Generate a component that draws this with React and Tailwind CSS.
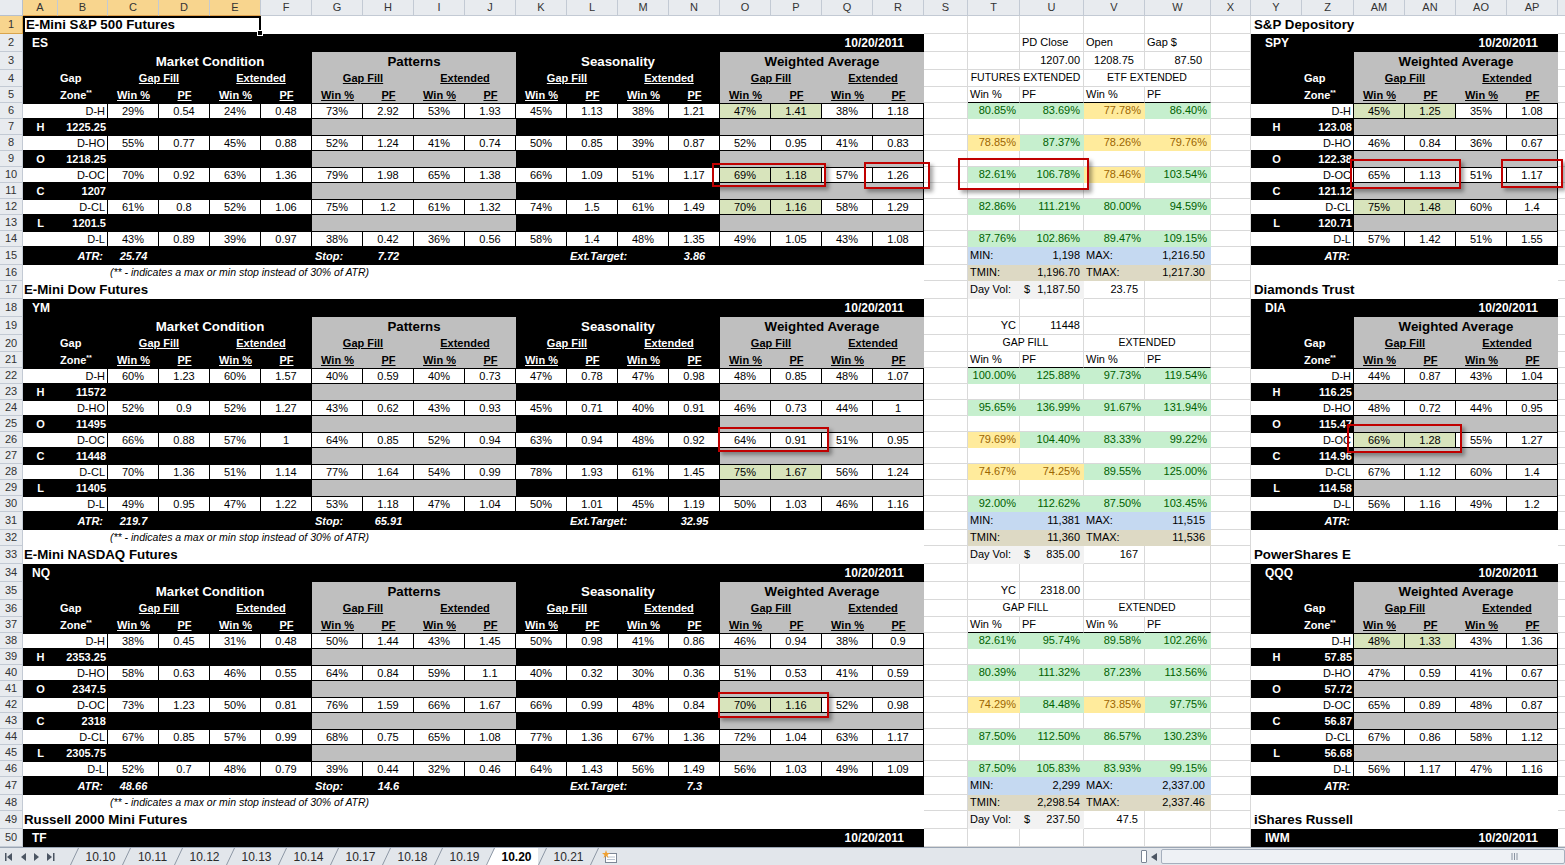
import React from "react";

const SEC = ["bg-black text-white", "bg-[#bfbfbf] text-black"];
const GL = "border-r border-b border-[#d9d9d9]";
const MW = ["w-[52px]", "w-[64px]", "w-[61px]", "w-[66px]"];
const AL = {
  l: "justify-start pl-[2px]",
  r: "justify-end pr-[3px]",
  c: "justify-center",
  r8: "justify-end pr-[8px]",
  "": "",
};
const FILL = {
  g: "bg-[#c6efce] text-[#006100] border-[#c6efce]",
  y: "bg-[#ffeb9c] text-[#9c6500] border-[#ffeb9c]",
};

const cols = [
  ["A", "w-[35px]", 1], ["B", "w-[50px]", 1], ["C", "w-[51px]", 1], ["D", "w-[51px]", 1], ["E", "w-[51px]", 1],
  ["F", "w-[51px]"], ["G", "w-[51px]"], ["H", "w-[51px]"], ["I", "w-[51px]"], ["J", "w-[51px]"],
  ["K", "w-[51px]"], ["L", "w-[51px]"], ["M", "w-[51px]"], ["N", "w-[51px]"], ["O", "w-[51px]"],
  ["P", "w-[51px]"], ["Q", "w-[51px]"], ["R", "w-[51px]"], ["S", "w-[44px]"], ["T", "w-[52px]"],
  ["U", "w-[64px]"], ["V", "w-[61px]"], ["W", "w-[66px]"], ["X", "w-[40px]"], ["Y", "w-[51px]"],
  ["Z", "w-[52px]"], ["AM", "w-[51px]"], ["AN", "w-[51px]"], ["AO", "w-[51px]"], ["AP", "w-[51px]"],
];

const blank = { t: "blank" };
const gapFill = { t: "span", a: "GAP FILL", b: "EXTENDED" };

const blocks = [
  {
    title: "E-Mini S&P 500 Futures", tk: "ES", etf: "S&P Depository", etk: "SPY",
    top: [
      { t: "cells", c: [["", ""], ["PD Close", "l"], ["Open", "l"], ["Gap $", "l"]] },
      { t: "cells", c: [["", ""], ["1207.00", "r"], ["1208.75", "c"], ["87.50", "r8"]] },
      { t: "span", a: "FUTURES EXTENDED", b: "ETF EXTENDED" },
    ],
    rows: [
      ["D-H", "29% 0.54 24% 0.48 73% 2.92 53% 1.93 45% 1.13 38% 1.21 47% 1.41 38% 1.18", [12, 13], "45% 1.25 35% 1.08", [0, 1], "80.85%g 83.69%g 77.78%y 86.40%g"],
      ["D-HO", "55% 0.77 45% 0.88 52% 1.24 41% 0.74 50% 0.85 39% 0.87 52% 0.95 41% 0.83", [], "46% 0.84 36% 0.67", [], "78.85%y 87.37%g 78.26%y 79.76%y"],
      ["D-OC", "70% 0.92 63% 1.36 79% 1.98 65% 1.38 66% 1.09 51% 1.17 69% 1.18 57% 1.26", [12, 13], "65% 1.13 51% 1.17", [], "82.61%g 106.78%g 78.46%y 103.54%g"],
      ["D-CL", "61% 0.8 52% 1.06 75% 1.2 61% 1.32 74% 1.5 61% 1.49 70% 1.16 58% 1.29", [12, 13], "75% 1.48 60% 1.4", [0, 1], "82.86%g 111.21%g 80.00%g 94.59%g"],
      ["D-L", "43% 0.89 39% 0.97 38% 0.42 36% 0.56 58% 1.4 48% 1.35 49% 1.05 43% 1.08", [], "57% 1.42 51% 1.55", [], "87.76%g 102.86%g 89.47%g 109.15%g"],
    ],
    levels: [["H", "1225.25", "123.08"], ["O", "1218.25", "122.38"], ["C", "1207", "121.12"], ["L", "1201.5", "120.71"]],
    atr: ["25.74", "7.72", "3.86"],
    min: ["1,198", "1,216.50"], tmin: ["1,196.70", "1,217.30"], dv: ["1,187.50", "23.75"],
  },
  {
    title: "E-Mini Dow Futures", tk: "YM", etf: "Diamonds Trust", etk: "DIA",
    top: [blank, { t: "cells", c: [["YC", "r"], ["11448", "r"], ["", ""], ["", ""]] }, gapFill],
    rows: [
      ["D-H", "60% 1.23 60% 1.57 40% 0.59 40% 0.73 47% 0.78 47% 0.98 48% 0.85 48% 1.07", [], "44% 0.87 43% 1.04", [], "100.00%g 125.88%g 97.73%g 119.54%g"],
      ["D-HO", "52% 0.9 52% 1.27 43% 0.62 43% 0.93 45% 0.71 40% 0.91 46% 0.73 44% 1", [], "48% 0.72 44% 0.95", [], "95.65%g 136.99%g 91.67%g 131.94%g"],
      ["D-OC", "66% 0.88 57% 1 64% 0.85 52% 0.94 63% 0.94 48% 0.92 64% 0.91 51% 0.95", [], "66% 1.28 55% 1.27", [0, 1], "79.69%y 104.40%g 83.33%g 99.22%g"],
      ["D-CL", "70% 1.36 51% 1.14 77% 1.64 54% 0.99 78% 1.93 61% 1.45 75% 1.67 56% 1.24", [12, 13], "67% 1.12 60% 1.4", [], "74.67%y 74.25%y 89.55%g 125.00%g"],
      ["D-L", "49% 0.95 47% 1.22 53% 1.18 47% 1.04 50% 1.01 45% 1.19 50% 1.03 46% 1.16", [], "56% 1.16 49% 1.2", [], "92.00%g 112.62%g 87.50%g 103.45%g"],
    ],
    levels: [["H", "11572", "116.25"], ["O", "11495", "115.47"], ["C", "11448", "114.96"], ["L", "11405", "114.58"]],
    atr: ["219.7", "65.91", "32.95"],
    min: ["11,381", "11,515"], tmin: ["11,360", "11,536"], dv: ["835.00", "167"],
  },
  {
    title: "E-Mini NASDAQ Futures", tk: "NQ", etf: "PowerShares E", etk: "QQQ",
    top: [blank, { t: "cells", c: [["YC", "r"], ["2318.00", "r"], ["", ""], ["", ""]] }, gapFill],
    rows: [
      ["D-H", "38% 0.45 31% 0.48 50% 1.44 43% 1.45 50% 0.98 41% 0.86 46% 0.94 38% 0.9", [], "48% 1.33 43% 1.36", [0, 1], "82.61%g 95.74%g 89.58%g 102.26%g"],
      ["D-HO", "58% 0.63 46% 0.55 64% 0.84 59% 1.1 40% 0.32 30% 0.36 51% 0.53 41% 0.59", [], "47% 0.59 41% 0.67", [], "80.39%g 111.32%g 87.23%g 113.56%g"],
      ["D-OC", "73% 1.23 50% 0.81 76% 1.59 66% 1.67 66% 0.99 48% 0.84 70% 1.16 52% 0.98", [12, 13], "65% 0.89 48% 0.87", [], "74.29%y 84.48%g 73.85%y 97.75%g"],
      ["D-CL", "67% 0.85 57% 0.99 68% 0.75 65% 1.08 77% 1.36 67% 1.36 72% 1.04 63% 1.17", [], "67% 0.86 58% 1.12", [], "87.50%g 112.50%g 86.57%g 130.23%g"],
      ["D-L", "52% 0.7 48% 0.79 39% 0.44 32% 0.46 64% 1.43 56% 1.49 56% 1.03 49% 1.09", [], "56% 1.17 47% 1.16", [], "87.50%g 105.83%g 83.93%g 99.15%g"],
    ],
    levels: [["H", "2353.25", "57.85"], ["O", "2347.5", "57.72"], ["C", "2318", "56.87"], ["L", "2305.75", "56.68"]],
    atr: ["48.66", "14.6", "7.3"],
    min: ["2,299", "2,337.00"], tmin: ["2,298.54", "2,337.46"], dv: ["237.50", "47.5"],
  },
  {
    title: "Russell 2000 Mini Futures", tk: "TF", etf: "iShares Russell", etk: "IWM",
    top: [blank, blank, blank],
  },
];

const boxes = [
  "left-[712px] top-[163px] w-[114px] h-[24px]",
  "left-[864px] top-[162px] w-[66px] h-[27px]",
  "left-[958px] top-[158px] w-[131px] h-[32px]",
  "left-[1350px] top-[159px] w-[111px] h-[30px]",
  "left-[1501px] top-[159px] w-[62px] h-[29px]",
  "left-[718px] top-[427px] w-[111px] h-[25px]",
  "left-[1347px] top-[424px] w-[115px] h-[29px]",
  "left-[718px] top-[692px] w-[111px] h-[26px]",
];

const HEIGHTS = [
  "h-[18px]", "h-[18px]", "h-[18px]", "h-[17px]", "h-[16px]",
  "h-[16px]", "h-[16px]", "h-[16px]", "h-[16px]", "h-[16px]", "h-[16px]", "h-[16px]", "h-[16px]", "h-[16px]",
  "h-[18px]", "h-[16px]",
];

/* ---------- left panel (A-R) ---------- */

function LeftTitle({ text, first }) {
  if (first) {
    return (
      <div className="flex w-[901px] shrink-0 bg-white">
        <div className="relative w-[238px] shrink-0 border-2 border-black flex items-center pl-px font-bold text-[13.3px] whitespace-nowrap">
          {text}
          <div className="absolute -right-[4px] -bottom-[4px] w-[6px] h-[6px] bg-black border border-white" />
        </div>
        <div className="flex-1" />
      </div>
    );
  }
  return (
    <div className="w-[901px] shrink-0 bg-white flex items-end pb-[2px] pl-px font-bold text-[13.3px] leading-[14px] whitespace-nowrap">{text}</div>
  );
}

function PanelHdr({ w, tk, pl }) {
  return (
    <div className={`${w} ${pl} shrink-0 bg-black text-white font-bold text-[12px] flex items-center justify-between pr-[20px]`}>
      <span>{tk}</span>
      <span>10/20/2011</span>
    </div>
  );
}

function LeftCat() {
  const t = ["Market Condition", "Patterns", "Seasonality", "Weighted Average"];
  return (
    <div className="flex w-[901px] shrink-0 font-bold text-[13.3px] leading-[14px]">
      <div className="w-[85px] bg-black" />
      {t.map((x, i) => (
        <div key={x} className={`w-[204px] flex items-end pb-[1px] justify-center ${SEC[i % 2]}`}>{x}</div>
      ))}
    </div>
  );
}

function LeftSub() {
  return (
    <div className="flex w-[901px] shrink-0 font-bold text-[11px]">
      <div className="w-[35px] bg-black" />
      <div className="w-[50px] bg-black text-white flex items-center pl-[2px]">Gap</div>
      {Array.from({ length: 8 }, (_, i) => (
        <div key={i} className={`w-[102px] flex items-center justify-center ${SEC[(i >> 1) % 2]}`}>
          <span className="underline">{i % 2 ? "Extended" : "Gap Fill"}</span>
        </div>
      ))}
    </div>
  );
}

function Zone() {
  return (
    <span>
      Zone<sup className="text-[7px]">**</sup>
    </span>
  );
}

function LeftCols() {
  return (
    <div className="flex w-[901px] shrink-0 font-bold text-[11px]">
      <div className="w-[35px] bg-black" />
      <div className="w-[50px] bg-black text-white flex items-center pl-[2px]"><Zone /></div>
      {Array.from({ length: 16 }, (_, i) => (
        <div key={i} className={`w-[51px] flex items-center justify-center ${SEC[(i >> 2) % 2]}`}>
          <span className="underline">{i % 2 ? "PF" : "Win %"}</span>
        </div>
      ))}
    </div>
  );
}

function DataCells({ vals, green }) {
  return vals.map((v, i) => (
    <div
      key={i}
      className={`w-[51px] shrink-0 border-y border-r border-black flex items-center justify-center ${green.includes(i) ? "bg-[#d8e4bc]" : "bg-white"}`}
    >
      {v}
    </div>
  ));
}

function LeftData({ z, v, g }) {
  return (
    <div className="flex w-[901px] shrink-0 text-[11px]">
      <div className="w-[85px] bg-white border-y border-r border-black flex items-center justify-end pr-[2px]">{z}</div>
      <DataCells vals={v.split(" ")} green={g} />
    </div>
  );
}

function LeftLevel({ lv, p }) {
  return (
    <div className="flex w-[901px] shrink-0 text-[11px] font-bold">
      <div className="w-[35px] bg-black text-white flex items-center justify-center">{lv}</div>
      <div className="w-[50px] bg-black text-white flex items-center justify-end pr-[2px]">{p}</div>
      <div className="w-[204px] bg-black" />
      <div className="w-[204px] bg-[#bfbfbf]" />
      <div className="w-[204px] bg-black" />
      <div className="w-[204px] bg-[#bfbfbf] border-r border-black" />
    </div>
  );
}

function LeftAtr({ a }) {
  return (
    <div className="flex w-[901px] shrink-0 bg-black text-white text-[11px] font-bold italic whitespace-nowrap">
      <div className="w-[85px] flex items-center justify-end pr-[5px]">ATR:</div>
      <div className="w-[51px] flex items-center justify-center">{a[0]}</div>
      <div className="w-[153px]" />
      <div className="w-[51px] flex items-center pl-[3px]">Stop:</div>
      <div className="w-[51px] flex items-center justify-center">{a[1]}</div>
      <div className="w-[153px]" />
      <div className="w-[102px] flex items-center pl-[3px]">Ext.Target:</div>
      <div className="w-[51px] flex items-center justify-center">{a[2]}</div>
      <div className="w-[204px]" />
    </div>
  );
}

function LeftNote() {
  return (
    <div className="w-[901px] shrink-0 bg-white flex items-center pl-[87px] text-[10.5px] italic whitespace-nowrap">
      (** - indicates a max or min stop instead of 30% of ATR)
    </div>
  );
}

/* ---------- right panel (Y-AP) ---------- */

function RightTitle({ text }) {
  return (
    <div className="w-[307px] shrink-0 bg-white flex items-end pb-[2px] pl-[3px] font-bold text-[13.3px] leading-[14px] whitespace-nowrap overflow-hidden">
      {text}
    </div>
  );
}

function RightCat() {
  return (
    <div className="flex w-[307px] shrink-0 font-bold text-[13.3px] leading-[14px]">
      <div className="w-[103px] bg-black" />
      <div className="w-[204px] bg-[#bfbfbf] flex items-end pb-[1px] justify-center">Weighted Average</div>
    </div>
  );
}

function RightSub() {
  return (
    <div className="flex w-[307px] shrink-0 font-bold text-[11px]">
      <div className="w-[51px] bg-black" />
      <div className="w-[52px] bg-black text-white flex items-center pl-[2px]">Gap</div>
      <div className="w-[102px] bg-[#bfbfbf] flex items-center justify-center"><span className="underline">Gap Fill</span></div>
      <div className="w-[102px] bg-[#bfbfbf] flex items-center justify-center"><span className="underline">Extended</span></div>
    </div>
  );
}

function RightCols() {
  return (
    <div className="flex w-[307px] shrink-0 font-bold text-[11px]">
      <div className="w-[51px] bg-black" />
      <div className="w-[52px] bg-black text-white flex items-center pl-[2px]"><Zone /></div>
      {["Win %", "PF", "Win %", "PF"].map((t, i) => (
        <div key={i} className="w-[51px] bg-[#bfbfbf] flex items-center justify-center">
          <span className="underline">{t}</span>
        </div>
      ))}
    </div>
  );
}

function RightData({ z, v, g }) {
  return (
    <div className="flex w-[307px] shrink-0 text-[11px]">
      <div className="w-[103px] bg-white border-y border-r border-black flex items-center justify-end pr-[2px]">{z}</div>
      <DataCells vals={v.split(" ")} green={g} />
    </div>
  );
}

function RightLevel({ lv, p }) {
  return (
    <div className="flex w-[307px] shrink-0 text-[11px] font-bold">
      <div className="w-[51px] bg-black text-white flex items-center justify-center">{lv}</div>
      <div className="w-[52px] bg-black text-white flex items-center justify-end pr-[2px]">{p}</div>
      <div className="w-[204px] bg-[#bfbfbf] border-r border-black" />
    </div>
  );
}

function RightAtr() {
  return (
    <div className="flex w-[307px] shrink-0 bg-black text-white text-[11px] font-bold italic">
      <div className="w-[103px] flex items-center justify-end pr-[4px]">ATR:</div>
      <div className="w-[204px]" />
    </div>
  );
}

/* ---------- middle (T-W) ---------- */

function Mid({ s }) {
  if (s.t === "blank") {
    return MW.map((w) => <div key={w} className={`${w} shrink-0 ${GL}`} />);
  }
  if (s.t === "cells") {
    return s.c.map(([text, al], i) => (
      <div key={i} className={`${MW[i]} shrink-0 ${GL} flex items-center ${AL[al]}`}>{text}</div>
    ));
  }
  if (s.t === "span") {
    return (
      <>
        <div className={`w-[116px] shrink-0 ${GL} flex items-center justify-center text-[10.5px]`}>{s.a}</div>
        <div className={`w-[127px] shrink-0 ${GL} flex items-center justify-center text-[10.5px]`}>{s.b}</div>
      </>
    );
  }
  if (s.t === "head") {
    return ["Win %", "PF", "Win %", "PF"].map((t, i) => (
      <div key={i} className={`${MW[i]} shrink-0 border-r border-b border-r-[#d9d9d9] border-b-black flex items-center pl-[2px]`}>{t}</div>
    ));
  }
  if (s.t === "vals") {
    return s.v.split(" ").map((x, i) => (
      <div key={i} className={`${MW[i]} shrink-0 border-r border-b flex items-center justify-end pr-[3px] ${FILL[x.slice(-1)]}`}>
        {x.slice(0, -1)}
      </div>
    ));
  }
  if (s.t === "min") {
    const bg = s.tan ? "bg-[#ddd9c4] border-[#ddd9c4]" : "bg-[#c5d9f1] border-[#c5d9f1]";
    const lab = s.tan ? ["TMIN:", "TMAX:"] : ["MIN:", "MAX:"];
    return (
      <>
        <div className={`w-[52px] shrink-0 border-r border-b ${bg} flex items-center pl-[2px]`}>{lab[0]}</div>
        <div className={`w-[64px] shrink-0 border-r border-b ${bg} flex items-center justify-end pr-[3px]`}>{s.v[0]}</div>
        <div className={`w-[61px] shrink-0 border-r border-b ${bg} flex items-center pl-[2px]`}>{lab[1]}</div>
        <div className={`w-[66px] shrink-0 border-r border-b ${bg} flex items-center justify-end pr-[5px]`}>{s.v[1]}</div>
      </>
    );
  }
  // day volume
  return (
    <>
      <div className="w-[52px] shrink-0 border-r border-b bg-[#f2f2f2] border-[#f2f2f2] flex items-center pl-[2px] whitespace-nowrap">Day Vol:</div>
      <div className="w-[64px] shrink-0 border-r border-b bg-[#f2f2f2] border-[#f2f2f2] flex items-center justify-between pl-[4px] pr-[3px]">
        <span>$</span>
        <span>{s.v[0]}</span>
      </div>
      <div className={`w-[61px] shrink-0 ${GL} flex items-center justify-end pr-[6px]`}>{s.v[1]}</div>
      <div className={`w-[66px] shrink-0 ${GL}`} />
    </>
  );
}

/* ---------- rows ---------- */

function RowHead({ n }) {
  return (
    <div
      className={`w-[23px] shrink-0 flex items-center justify-center text-[11px] text-[#333] border-r border-b ${n === 1 ? "bg-[#f8d58e] border-[#d9a54d]" : "bg-[#e8ebef] border-[#c3cad4]"}`}
    >
      {n}
    </div>
  );
}

function SheetRow({ n, h, left, mid, right }) {
  return (
    <div className={`flex shrink-0 ${h}`}>
      <RowHead n={n} />
      {left}
      <div className={`w-[44px] shrink-0 ${GL}`} />
      <div className="flex shrink-0 w-[243px] text-[11px]">
        <Mid s={mid} />
      </div>
      <div className={`w-[40px] shrink-0 ${GL}`} />
      {right}
      <div className="flex-1 border-b border-[#d9d9d9]" />
    </div>
  );
}

function buildRows() {
  const out = [];
  blocks.forEach((b, k) => {
    const prev = blocks[k - 1];
    const count = b.rows ? 16 : 3;
    for (let r = 0; r < count; r++) {
      const n = 1 + 16 * k + r;
      const h = HEIGHTS[r];
      let left, right, mid;
      if (r === 0) {
        left = <LeftTitle text={b.title} first={k === 0} />;
        right = <RightTitle text={b.etf} />;
        mid = prev ? { t: "dv", v: prev.dv } : blank;
      } else if (r === 1) {
        left = <PanelHdr w="w-[901px]" pl="pl-[9px]" tk={b.tk} />;
        right = <PanelHdr w="w-[307px]" pl="pl-[14px]" tk={b.etk} />;
        mid = b.top[0];
      } else if (r === 2) {
        left = <LeftCat />;
        right = <RightCat />;
        mid = b.top[1];
      } else if (r === 3) {
        left = <LeftSub />;
        right = <RightSub />;
        mid = b.top[2];
      } else if (r === 4) {
        left = <LeftCols />;
        right = <RightCols />;
        mid = { t: "head" };
      } else if (r <= 13) {
        if ((r - 5) % 2 === 0) {
          const d = b.rows[(r - 5) / 2];
          left = <LeftData z={d[0]} v={d[1]} g={d[2]} />;
          right = <RightData z={d[0]} v={d[3]} g={d[4]} />;
          mid = { t: "vals", v: d[5] };
        } else {
          const l = b.levels[(r - 6) / 2];
          left = <LeftLevel lv={l[0]} p={l[1]} />;
          right = <RightLevel lv={l[0]} p={l[2]} />;
          mid = blank;
        }
      } else if (r === 14) {
        left = <LeftAtr a={b.atr} />;
        right = <RightAtr />;
        mid = { t: "min", v: b.min };
      } else {
        left = <LeftNote />;
        right = <div className="w-[307px] shrink-0 bg-white" />;
        mid = { t: "min", v: b.tmin, tan: true };
      }
      out.push(<SheetRow key={n} n={n} h={h} left={left} mid={mid} right={right} />);
    }
  });
  return out;
}

/* ---------- chrome ---------- */

function ColHeader() {
  return (
    <div className="flex h-[16px] shrink-0 text-[11px] text-[#333]">
      <div className="w-[23px] shrink-0 bg-[#e8ebef] border-r border-b border-[#b7c0cc]" />
      {cols.map(([l, w, s]) => (
        <div
          key={l}
          className={`${w} shrink-0 flex items-center justify-center border-r border-b ${s ? "bg-[#f8d58e] border-r-[#c3cad4] border-b-[#e0a04a]" : "bg-[#e8ebef] border-[#c3cad4]"}`}
        >
          {l}
        </div>
      ))}
      <div className="flex-1 bg-[#e8ebef] border-b border-[#c3cad4]" />
    </div>
  );
}

const tabs = ["10.10", "10.11", "10.12", "10.13", "10.14", "10.17", "10.18", "10.19", "10.20", "10.21"];

function Slant({ fill }) {
  return (
    <svg width="9" height="17" viewBox="0 0 9 17" className="block shrink-0">
      {fill && <polygon points="0,17 9,0 9,17" fill="#ffffff" />}
      <line x1="0.5" y1="17" x2="8.5" y2="0" stroke="#8d97a5" strokeWidth="1" />
    </svg>
  );
}

function TabBar() {
  return (
    <div className="flex h-[18px] shrink-0 bg-[#e2e6eb] border-t border-[#9aa5b4] text-[12px] text-[#2b2b2b]">
      <div className="w-[70px] shrink-0 flex items-center gap-[8px] pl-[5px]">
        <svg width="8" height="8" viewBox="0 0 8 8">
          <rect x="0" y="0" width="1.5" height="8" fill="#4b5563" />
          <polygon points="7,0 2,4 7,8" fill="#4b5563" />
        </svg>
        <svg width="5" height="8" viewBox="0 0 5 8">
          <polygon points="5,0 0,4 5,8" fill="#4b5563" />
        </svg>
        <svg width="5" height="8" viewBox="0 0 5 8">
          <polygon points="0,0 5,4 0,8" fill="#4b5563" />
        </svg>
        <svg width="8" height="8" viewBox="0 0 8 8">
          <polygon points="0,0 5,4 0,8" fill="#4b5563" />
          <rect x="6" y="0" width="1.5" height="8" fill="#4b5563" />
        </svg>
      </div>
      {tabs.map((t) => {
        const a = t === "10.20";
        return (
          <div key={t} className="flex shrink-0">
            <Slant fill={a} />
            <div className={`w-[43px] flex items-center justify-center ${a ? "bg-white font-bold text-black" : ""}`}>{t}</div>
          </div>
        );
      })}
      <Slant />
      <div className="flex items-center pl-[3px]">
        <svg width="16" height="14" viewBox="0 0 16 14">
          <rect x="3.5" y="3.5" width="11" height="9" fill="#ffffff" stroke="#7d8796" />
          <line x1="5" y1="7" x2="13" y2="7" stroke="#b8c2cf" />
          <line x1="5" y1="9.5" x2="13" y2="9.5" stroke="#b8c2cf" />
          <polygon points="4,0 5,3 8,3 5.5,5 6.5,8 4,6 1.5,8 2.5,5 0,3 3,3" fill="#f0a030" />
        </svg>
      </div>
      <div className="flex-1" />
      <div className="w-[425px] shrink-0 flex items-center gap-[4px] pl-px">
        <div className="w-[6px] h-[13px] bg-white border border-[#7b8594] rounded-[1px]" />
        <svg width="6" height="8" viewBox="0 0 6 8">
          <polygon points="6,0 0,4 6,8" fill="#4b5563" />
        </svg>
        <div className="flex-1 h-[15px] rounded-[2px] border border-[#a5afbd] bg-[#eef1f5] flex items-center justify-end pr-[46px]">
          <svg width="7" height="7" viewBox="0 0 7 7">
            <line x1="1" y1="0" x2="1" y2="7" stroke="#8a94a2" />
            <line x1="3.5" y1="0" x2="3.5" y2="7" stroke="#8a94a2" />
            <line x1="6" y1="0" x2="6" y2="7" stroke="#8a94a2" />
          </svg>
        </div>
      </div>
    </div>
  );
}

export default function App() {
  return (
    <div className="relative w-[1565px] h-[865px] overflow-hidden bg-white flex flex-col text-black font-['Liberation_Sans',Arial,sans-serif]">
      <ColHeader />
      <div className="flex-1 overflow-hidden flex flex-col">{buildRows()}</div>
      <TabBar />
      {boxes.map((b) => (
        <div
          key={b}
          className={`absolute ${b} border-2 border-[#c00000] shadow-[3px_3px_4px_rgba(0,0,0,0.35)] pointer-events-none`}
        />
      ))}
    </div>
  );
}
